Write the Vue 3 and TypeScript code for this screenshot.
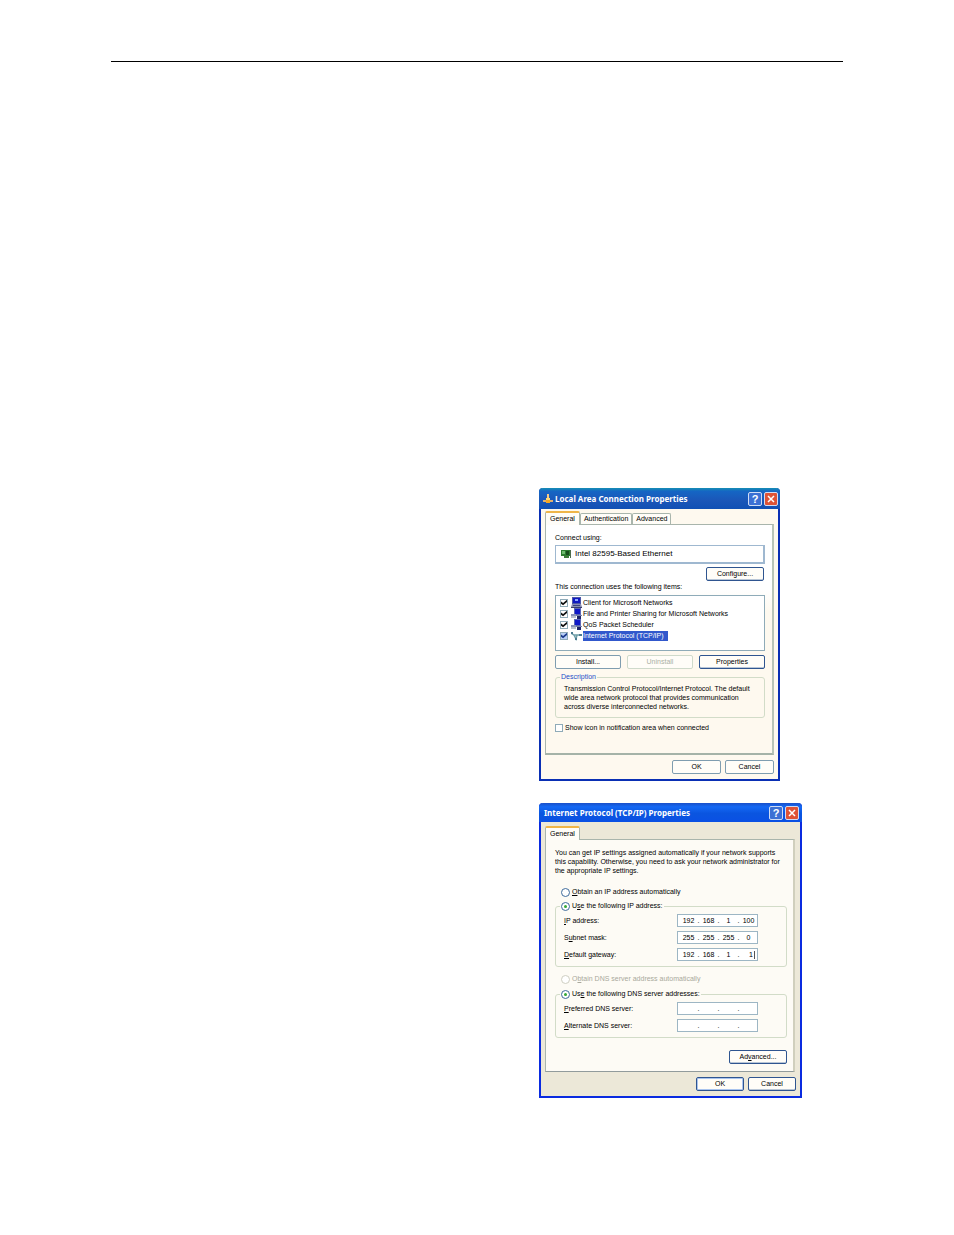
<script setup lang="ts">
import { ref } from 'vue'

interface Item {
  id: string
  label: string
  icon: 'client' | 'service' | 'protocol'
  checked: boolean
}
interface Address {
  id: string
  key: string
  before: string
  after: string
  parts: string[]
  caret?: boolean
}

const adapter = ref('Intel 82595-Based Ethernet')
const showIcon = ref(false)
const ipMode = ref('manual')
const dnsMode = ref('manual')

const items = ref<Item[]>([
  { id: 'client', label: 'Client for Microsoft Networks', icon: 'client', checked: true },
  { id: 'share', label: 'File and Printer Sharing for Microsoft Networks', icon: 'service', checked: true },
  { id: 'qos', label: 'QoS Packet Scheduler', icon: 'service', checked: true },
  { id: 'tcpip', label: 'Internet Protocol (TCP/IP)', icon: 'protocol', checked: true },
])

const ipRows = ref<Address[]>([
  { id: 'ip', before: '', key: 'I', after: 'P address:', parts: ['192', '168', '1', '100'] },
  { id: 'mask', before: 'S', key: 'u', after: 'bnet mask:', parts: ['255', '255', '255', '0'] },
  { id: 'gateway', before: '', key: 'D', after: 'efault gateway:', parts: ['192', '168', '1', '1'], caret: true },
])
const dnsRows = ref<Address[]>([
  { id: 'dns1', before: '', key: 'P', after: 'referred DNS server:', parts: ['', '', '', ''] },
  { id: 'dns2', before: '', key: 'A', after: 'lternate DNS server:', parts: ['', '', '', ''] },
])
</script>

<template>
  <main class="page">
    <hr class="rule" />
    <div class="columns">
      <div class="figures">
        <section class="dialog lan" aria-label="Local Area Connection Properties">
          <header class="titlebar">
            <svg class="title-icon" viewBox="0 0 10 10" aria-hidden="true">
              <path d="M4 0h2v5H4z" fill="#f3c987" />
              <path d="M3 4h4v2H3z" fill="#ffd873" />
              <path d="M0 6h10v2H0z" fill="#e0b070" />
              <path d="M3 6h4v3H3z" fill="#f5a623" />
            </svg>
            <h2>Local Area Connection Properties</h2>
            <button class="cap help" type="button" aria-label="Help">?</button>
            <button class="cap close" type="button" aria-label="Close">
              <svg viewBox="0 0 8 8"><path d="M1 1l6 6M7 1L1 7" stroke="#fff" stroke-width="1.500" /></svg>
            </button>
          </header>
          <div class="body">
            <nav class="tabs">
              <button class="tab active" type="button">General</button>
              <button class="tab" type="button">Authentication</button>
              <button class="tab" type="button">Advanced</button>
            </nav>
            <div class="panel">
              <label class="line" for="adapter">Connect using:</label>
              <div class="adapter">
                <svg viewBox="0 0 12 10" aria-hidden="true">
                  <path d="M1 1h10v6H1z" fill="#2f7d32" />
                  <path d="M2 2h3v3H2z" fill="#6fbb6f" />
                  <path d="M6 2h3v4H6z" fill="#174d1c" />
                  <path d="M4 7h5v2H4z" fill="#3f7a3a" />
                  <path d="M10 1h1v8h-1z" fill="#4d6b4d" />
                </svg>
                <input id="adapter" v-model="adapter" readonly />
              </div>
              <div class="right"><button class="btn strong wide" type="button">Configure...</button></div>
              <p class="line">This connection uses the following items:</p>
              <ul class="items">
                <li v-for="item in items" :key="item.id" :class="{ selected: item.icon === 'protocol' }">
                  <input :id="item.id" v-model="item.checked" type="checkbox" class="check" />
                  <svg v-if="item.icon === 'client'" viewBox="0 0 11 11" aria-hidden="true">
                    <path d="M1 0h9v7H1z" fill="#4d58a8" />
                    <path d="M2 1h7v5H2z" fill="#1018c0" />
                    <path d="M4 2h3v2H4z" fill="#8fa8ff" />
                    <path d="M1 7h9l1 3H0z" fill="#8a8eb0" />
                    <path d="M0 10h11v1H0z" fill="#3a3f68" />
                    <path d="M2 8h7v1H2z" fill="#3a4288" />
                  </svg>
                  <svg v-else-if="item.icon === 'service'" viewBox="0 0 11 11" aria-hidden="true">
                    <path d="M3 0h7v7H3z" fill="#5a66b8" />
                    <path d="M4 1h5v5H4z" fill="#1018c8" />
                    <path d="M0 6h5v2H0z" fill="#8a93b8" />
                    <path d="M0 8h5v2H0z" fill="#b9c0d0" />
                    <path d="M5 7h6v1H5z" fill="#7a82a8" />
                    <path d="M6 8h4v3H6z" fill="#1c2468" />
                  </svg>
                  <svg v-else viewBox="0 0 11 11" aria-hidden="true">
                    <path d="M0 3l3 2h8M3 5l2 4 1-4" fill="none" stroke="#6f9fa8" stroke-width="1.500" />
                    <path d="M0 2h2v2H0zM4 8h2v2H4zM8 4h3v2H8z" fill="#4c7a90" />
                  </svg>
                  <label :for="item.id">{{ item.label }}</label>
                </li>
              </ul>
              <div class="trio">
                <button class="btn" type="button">Install...</button>
                <button class="btn" type="button" disabled>Uninstall</button>
                <button class="btn strong" type="button">Properties</button>
              </div>
              <fieldset class="group description">
                <legend>Description</legend>
                <p>Transmission Control Protocol/Internet Protocol. The default<br />wide area network protocol that provides communication<br />across diverse interconnected networks.</p>
              </fieldset>
              <label class="option notify">
                <input v-model="showIcon" type="checkbox" class="check" />Show icon in notification area when connected
              </label>
            </div>
            <footer class="actions">
              <button class="btn" type="button">OK</button>
              <button class="btn" type="button">Cancel</button>
            </footer>
          </div>
        </section>

        <section class="dialog tcp" aria-label="Internet Protocol (TCP/IP) Properties">
          <header class="titlebar">
            <h2>Internet Protocol (TCP/IP) Properties</h2>
            <button class="cap help" type="button" aria-label="Help">?</button>
            <button class="cap close" type="button" aria-label="Close">
              <svg viewBox="0 0 8 8"><path d="M1 1l6 6M7 1L1 7" stroke="#fff" stroke-width="1.500" /></svg>
            </button>
          </header>
          <div class="body">
            <nav class="tabs">
              <button class="tab active" type="button">General</button>
            </nav>
            <div class="panel">
              <p class="intro">You can get IP settings assigned automatically if your network supports<br />this capability. Otherwise, you need to ask your network administrator for<br />the appropriate IP settings.</p>
              <label class="option">
                <input v-model="ipMode" type="radio" value="auto" name="ip" class="radio" />
                <span><u>O</u>btain an IP address automatically</span>
              </label>
              <fieldset class="group">
                <legend>
                  <label class="option">
                    <input v-model="ipMode" type="radio" value="manual" name="ip" class="radio" />
                    <span>U<u>s</u>e the following IP address:</span>
                  </label>
                </legend>
                <div v-for="row in ipRows" :key="row.id" class="field">
                  <label :for="row.id">{{ row.before }}<u>{{ row.key }}</u>{{ row.after }}</label>
                  <div class="address" :class="{ editing: row.caret }">
                    <template v-for="(_, i) in row.parts" :key="i">
                      <span v-if="i" class="dot">.</span>
                      <input :id="i ? undefined : row.id" v-model="row.parts[i]" maxlength="3" :aria-label="row.id + ' octet ' + (i + 1)" />
                    </template>
                  </div>
                </div>
              </fieldset>
              <label class="option off">
                <input v-model="dnsMode" type="radio" value="auto" name="dns" class="radio" disabled />
                <span>O<u>b</u>tain DNS server address automatically</span>
              </label>
              <fieldset class="group">
                <legend>
                  <label class="option">
                    <input v-model="dnsMode" type="radio" value="manual" name="dns" class="radio" />
                    <span>Us<u>e</u> the following DNS server addresses:</span>
                  </label>
                </legend>
                <div v-for="row in dnsRows" :key="row.id" class="field">
                  <label :for="row.id">{{ row.before }}<u>{{ row.key }}</u>{{ row.after }}</label>
                  <div class="address">
                    <template v-for="(_, i) in row.parts" :key="i">
                      <span v-if="i" class="dot">.</span>
                      <input :id="i ? undefined : row.id" v-model="row.parts[i]" maxlength="3" :aria-label="row.id + ' octet ' + (i + 1)" />
                    </template>
                  </div>
                </div>
              </fieldset>
              <div class="right"><button class="btn strong wide" type="button">Ad<u>v</u>anced...</button></div>
            </div>
            <footer class="actions">
              <button class="btn default" type="button">OK</button>
              <button class="btn strong" type="button">Cancel</button>
            </footer>
          </div>
        </section>
      </div>
    </div>
  </main>
</template>

<style>
body {
  background: #fff;
}
</style>

<style scoped>
* {
  box-sizing: border-box;
}
.page {
  padding: 61px 111px 137px;
  font: 7px/10px 'Liberation Sans', Arial, sans-serif;
  color: #000;
}
button,
input {
  font: inherit;
  color: inherit;
  margin: 0;
}
p,
h2,
ul {
  margin: 0;
  padding: 0;
}
.rule {
  margin: 0;
  border: 0;
  border-top: 1px solid #000;
}
.columns {
  display: grid;
  grid-template-columns: 107fr 76fr;
  padding-top: 426px;
}
.figures {
  grid-column: 2;
  display: flex;
  flex-direction: column;
  align-items: flex-start;
  gap: 22px;
}
.dialog {
  border: 2px solid #0a2fb4;
  border-top: 0;
  border-radius: 4px 4px 0 0;
  max-width: 100%;
}
.lan {
  width: 241px;
  background: #fef9ef;
}
.tcp {
  width: 263px;
  background: #ece8d8;
  border-color: #0a2be0;
}
.titlebar {
  display: flex;
  align-items: center;
  gap: 2px;
  height: 21px;
  margin: 0 -2px;
  padding: 0 3px 0 4px;
  color: #fff;
  border-radius: 4px 4px 0 0;
  background: linear-gradient(#168fb4, #1566c4 15%, #1b56b8 60%, #1150b4);
}
.tcp .titlebar {
  height: 19px;
  padding-left: 5px;
  background: linear-gradient(#1a50c8, #1468f4 20%, #0a55e0 55%, #0a50e4);
}
.title-icon {
  width: 10px;
  height: 10px;
}
h2 {
  flex: 1;
  font-family: 'Noto Sans', 'Open Sans', sans-serif;
  font-size: 8px;
  line-height: 12px;
  font-weight: 700;
  white-space: nowrap;
}
.cap {
  display: grid;
  place-items: center;
  width: 14px;
  height: 14px;
  padding: 0;
  border: 1px solid #cfdcf5;
  border-radius: 2px;
  color: #fff;
  font-size: 11px;
  line-height: 12px;
  font-weight: 700;
}
.lan .cap {
  margin-right: -1px;
  margin-left: 1px;
}
.help {
  background: #3c70d4;
}
.close {
  background: #de5336;
}
.cap svg {
  width: 8px;
  height: 8px;
}
.body {
  padding: 2px 4px 5px;
}
.tcp .body {
  padding-top: 4px;
}
.tabs {
  display: flex;
  align-items: flex-end;
  height: 13px;
}
.tab {
  height: 11px;
  padding: 0 3px;
  border: 1px solid #a9b5ac;
  border-bottom: 0;
  border-radius: 2px 2px 0 0;
  background: #fffdf8;
  line-height: 10px;
  white-space: nowrap;
}
.tab.active {
  height: 14px;
  margin-bottom: -1px;
  padding: 0 4px;
  border-top: 2px solid #efb548;
  position: relative;
}
.panel {
  padding: 8px 7px 0 9px;
  border: 1px solid #a9b5ac;
  border-right: 2px solid #b9c4b8;
  border-bottom: 2px solid #a5b3a8;
}
.lan .panel {
  min-height: 231px;
  background: linear-gradient(#fff 28%, #fef9ef 38%);
}
.tcp .panel {
  min-height: 233px;
  margin-right: 1px;
  padding-right: 6px;
  border-right-color: #d0cfbd;
  border-bottom: 1px solid #919b9c;
  background: #fdfbf5;
}
.line {
  display: block;
}
.adapter {
  display: flex;
  align-items: center;
  gap: 3px;
  height: 19px;
  margin-top: 2px;
  padding-left: 4px;
  border: 1px solid #9fb8d0;
  border-right-width: 2px;
  border-bottom-width: 2px;
  background: #fff;
}
.adapter svg {
  width: 12px;
  height: 10px;
}
.adapter input {
  flex: 1;
  min-width: 0;
  padding: 0;
  border: 0;
  background: none;
  font-size: 8px;
}
.right {
  display: flex;
  justify-content: flex-end;
}
.lan .right {
  margin: 3px 1px 1px;
}
.btn {
  height: 14px;
  padding: 0;
  border: 1px solid #7f9db0;
  border-radius: 2px;
  background: #fffdf8;
  line-height: 10px;
  white-space: nowrap;
}
.strong {
  border-color: #2f5590;
  box-shadow: inset 0 -1px #b9c6d6;
}
.default {
  border-color: #2f5590;
  box-shadow: inset 0 0 0 1px #a9c4ee;
}
.btn:disabled {
  color: #aab0a4;
  border-color: #cfdacb;
}
.wide {
  width: 58px;
}
.items {
  height: 56px;
  margin-top: 3px;
  padding: 1px 4px;
  border: 1px solid #8fabb8;
  background: #fff;
  list-style: none;
}
.items li {
  display: flex;
  align-items: center;
  height: 11px;
}
.items svg {
  width: 11px;
  height: 11px;
  margin: 0 1px 0 3px;
}
.items label {
  white-space: nowrap;
}
.selected label {
  color: #fff;
  background: #3158cc;
  padding-right: 4px;
}
.check {
  display: grid;
  place-items: center;
  flex: none;
  appearance: none;
  width: 8px;
  height: 8px;
  border: 1px solid #8fabb8;
  background: #fff;
}
.selected .check {
  background: #b9d0f8;
}
.check:checked::after {
  content: '';
  width: 6px;
  height: 6px;
  background: #111;
  clip-path: polygon(0 35%, 35% 60%, 100% 5%, 100% 40%, 35% 95%, 0 70%);
}
.selected .check:checked::after {
  background: #1a3a8c;
}
.trio {
  display: grid;
  grid-template-columns: repeat(3, 66px);
  justify-content: space-between;
  margin-top: 4px;
}
.group {
  min-width: 0;
  margin: 0;
  padding: 0 8px;
  border: 1px solid #d2dcc8;
  border-radius: 3px;
}
.group legend {
  margin-left: -4px;
  padding: 0 1px;
}
.description {
  height: 46px;
  margin-top: 3px;
}
.description legend {
  color: #2450c8;
}
.description p {
  padding-top: 2px;
  line-height: 9px;
  white-space: nowrap;
}
.option {
  display: flex;
  align-items: center;
  gap: 2px;
  height: 10px;
  white-space: nowrap;
}
.notify {
  margin-top: 5px;
}
.actions {
  display: flex;
  justify-content: flex-end;
  gap: 4px;
  padding-top: 5px;
}
.actions .btn {
  width: 49px;
}
.tcp .actions .btn {
  width: 48px;
}
.intro {
  line-height: 9px;
  white-space: nowrap;
}
.tcp .panel > .option {
  margin: 12px 0 4px 6px;
}
.tcp .panel > .off {
  margin: 7px 0 5px 6px;
  color: #a9a99c;
}
.radio {
  flex: none;
  display: grid;
  place-items: center;
  appearance: none;
  width: 9px;
  height: 9px;
  border: 1px solid #3f6c9c;
  border-radius: 50%;
  background: #fff;
}
.radio:disabled {
  border-color: #cfcfc2;
}
.radio:checked::after {
  content: '';
  width: 3px;
  height: 3px;
  border-radius: 50%;
  background: #35a835;
}
.field {
  display: flex;
  align-items: center;
  justify-content: space-between;
  height: 13px;
  margin: 0 20px 4px 0;
}
.field:last-child {
  margin-bottom: 5px;
}
.group legend + .field {
  margin-top: 3px;
}
.address {
  display: flex;
  align-items: center;
  width: 81px;
  height: 13px;
  padding-left: 2px;
  border: 1px solid #9db6c4;
  background: #fff;
}
.address input {
  width: 17px;
  height: 10px;
  padding: 0;
  border: 0;
  background: none;
  text-align: center;
}
.editing input:last-child {
  padding-right: 4px;
  text-align: right;
  background: linear-gradient(#555, #555) 14px 1px / 1px 8px no-repeat;
}
.dot {
  width: 3px;
  text-align: center;
}
.tcp .right {
  margin-top: 12px;
}
</style>
